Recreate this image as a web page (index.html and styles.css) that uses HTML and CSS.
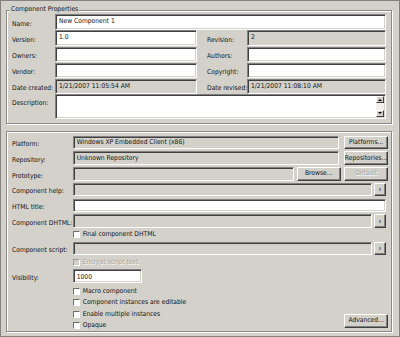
FILE: index.html
```html
<!DOCTYPE html>
<html lang="en">
<head>
    <meta charset="UTF-8">
    <title>Component Properties</title>
    <link rel="stylesheet" href="styles.css">
</head>
<body>

<div class="window">
    <div class="group">
        <span class="legend">Component Properties</span>
        <div class="props">
            <div class="lbl">Name:</div>
            <div class="field span3">New Component 1</div>

            <div class="lbl">Version:</div>
            <div class="field">1.0</div>
            <div class="lbl lbl2">Revision:</div>
            <div class="field off">2</div>

            <div class="lbl">Owners:</div>
            <div class="field"></div>
            <div class="lbl lbl2">Authors:</div>
            <div class="field"></div>

            <div class="lbl">Vendor:</div>
            <div class="field"></div>
            <div class="lbl lbl2">Copyright:</div>
            <div class="field"></div>

            <div class="lbl">Date created:</div>
            <div class="field off">1/21/2007 11:05:54 AM</div>
            <div class="lbl lbl2">Date revised:</div>
            <div class="field off">1/21/2007 11:08:10 AM</div>

            <div class="lbl lbl-top">Description:</div>
            <div class="field memo span3">
                <div class="memo-text"></div>
                <div class="scroll">
                    <div class="arrow"><span class="tri up"></span></div>
                    <div class="track"></div>
                    <div class="arrow"><span class="tri down"></span></div>
                </div>
            </div>
        </div>
    </div>

    <div class="panel">
        <div class="row">
            <div class="lbl">Platform:</div>
            <div class="field off">Windows XP Embedded Client (x86)</div>
            <div class="btn wide-btn">Platforms...</div>
        </div>
        <div class="row">
            <div class="lbl">Repository:</div>
            <div class="field off">Unknown Repository</div>
            <div class="btn wide-btn">Repositories...</div>
        </div>
        <div class="row">
            <div class="lbl">Prototype:</div>
            <div class="field off"></div>
            <div class="btn browse">Browse...</div>
            <div class="btn wide-btn disabled">Default</div>
        </div>
        <div class="row">
            <div class="lbl">Component help:</div>
            <div class="field off"></div>
            <div class="btn more">&rsaquo;</div>
        </div>
        <div class="row">
            <div class="lbl">HTML title:</div>
            <div class="field end"></div>
        </div>
        <div class="row">
            <div class="lbl">Component DHTML:</div>
            <div class="field off"></div>
            <div class="btn more">&rsaquo;</div>
        </div>
        <div class="check">
            <span class="box"></span>Final component DHTML
        </div>
        <div class="row">
            <div class="lbl">Component script:</div>
            <div class="field off"></div>
            <div class="btn more">&rsaquo;</div>
        </div>
        <div class="check disabled">
            <span class="box"></span>Encrypt script text
        </div>
        <div class="row">
            <div class="lbl">Visibility:</div>
            <div class="field visibility">1000</div>
        </div>
        <div class="bottom">
            <div class="checks">
                <div class="check"><span class="box"></span>Macro component</div>
                <div class="check"><span class="box"></span>Component instances are editable</div>
                <div class="check"><span class="box"></span>Enable multiple instances</div>
                <div class="check"><span class="box"></span>Opaque</div>
            </div>
            <div class="btn wide-btn advanced">Advanced...</div>
        </div>
    </div>
</div>

</body>
</html>
```

FILE: styles.css
```css
* {
    box-sizing: border-box;
}
body {
    margin: 0;
    background-color: #d4d1cb;
    font-family: "DejaVu Sans Condensed", "Liberation Sans", Arial, sans-serif;
    font-size: 6.7px;
    color: #111;
}
.window {
    width: 400px;
    height: 337px;
    border: 1px solid #85837f;
    padding-left: 5px;
}
/* etched frames */
.group,
.panel {
    width: 386px;
    border: 1px solid #8c8a86;
    box-shadow: inset 1px 1px #fff, 1px 1px #fff;
}
.group {
    position: relative;
    margin-top: 9px;
    height: 114px;
    padding: 3px 5px 0 5px;
}
.legend {
    position: absolute;
    top: -6px;
    left: 3px;
    padding: 0 1px;
    line-height: 9px;
    background-color: #d4d1cb;
}
.props {
    display: grid;
    grid-template-columns: 43px 142px 50px 139px;
    grid-template-rows: 15.5px 15.5px 15.5px 15.5px 14.5px 24.5px;
    row-gap: 0.8px;
}
.lbl {
    align-self: end;
    line-height: 9px;
    padding-bottom: 1px;
    white-space: nowrap;
}
.lbl2 {
    padding-left: 10px;
}
.lbl-top {
    align-self: start;
    padding-top: 5px;
}
.span3 {
    grid-column: 2 / 5;
}
.field {
    background-color: #fff;
    border: 1px solid;
    border-color: #808080 #fff #fff #808080;
    box-shadow: inset 1px 1px #404040, inset -1px -1px #d4d1cb;
    padding: 1.5px 3px 0;
    line-height: 9px;
    white-space: nowrap;
    overflow: hidden;
}
.field.off {
    background-color: #d4d1cb;
}
.memo {
    display: flex;
    padding: 1px;
}
.memo-text {
    flex: 1;
}
.scroll {
    width: 8px;
    display: flex;
    flex-direction: column;
}
.track {
    flex: 1;
    background-color: #f1f0ee;
}
.arrow {
    height: 7px;
    background-color: #d4d1cb;
    border: 1px solid;
    border-color: #fff #404040 #404040 #fff;
    display: flex;
    align-items: center;
    justify-content: center;
}
.tri {
    width: 0;
    height: 0;
    border-left: 2px solid transparent;
    border-right: 2px solid transparent;
}
.tri.up {
    border-bottom: 2px solid #000;
}
.tri.down {
    border-top: 2px solid #000;
}

.panel {
    margin-top: 7px;
    height: 201px;
    padding: 3.5px 2.7px 0 5px;
    display: flex;
    flex-direction: column;
    gap: 2.25px;
}
.row {
    display: flex;
    height: 13.5px;
}
.row .lbl {
    width: 60.7px;
    flex: none;
    padding-bottom: 0;
}
.row .field {
    flex: 1;
}
.row .field.end {
    margin-right: 2.6px;
}
.row .field.visibility {
    flex: none;
    width: 69px;
    padding-top: 2.5px;
}
.btn {
    flex: none;
    background-color: #d4d1cb;
    border: 1px solid;
    border-color: #fff #404040 #404040 #fff;
    box-shadow: inset -1px -1px #808080;
    display: flex;
    align-items: center;
    justify-content: center;
    line-height: 9px;
    white-space: nowrap;
}
.wide-btn {
    width: 44.3px;
    margin-left: 4.7px;
}
.browse {
    width: 44px;
    margin-left: 2.7px;
}
.browse + .wide-btn {
    margin-left: 3.3px;
}
.btn.disabled {
    color: #a19e98;
    text-shadow: 0.5px 0.5px #fff;
}
.more {
    width: 11.4px;
    margin-left: 2px;
    margin-right: 2.6px;
    font-size: 8px;
}
.check {
    display: flex;
    align-items: center;
    height: 9.5px;
    margin-left: 60.7px;
    line-height: 9px;
    white-space: nowrap;
}
.check.disabled {
    color: #a19e98;
    text-shadow: 0.5px 0.5px #fff;
}
.box {
    width: 7px;
    height: 7px;
    margin-right: 3px;
    background-color: #fff;
    border: 1px solid;
    border-color: #6f6d69 #fff #fff #6f6d69;
}
.check.disabled .box {
    background-color: #d4d1cb;
    border-color: #a19e98 #fff #fff #a19e98;
}
.bottom {
    display: flex;
    justify-content: space-between;
    margin-top: 1.5px;
}
.checks {
    display: flex;
    flex-direction: column;
    gap: 2px;
}
.advanced {
    align-self: flex-end;
    height: 13.5px;
    margin-bottom: 3px;
}
```
